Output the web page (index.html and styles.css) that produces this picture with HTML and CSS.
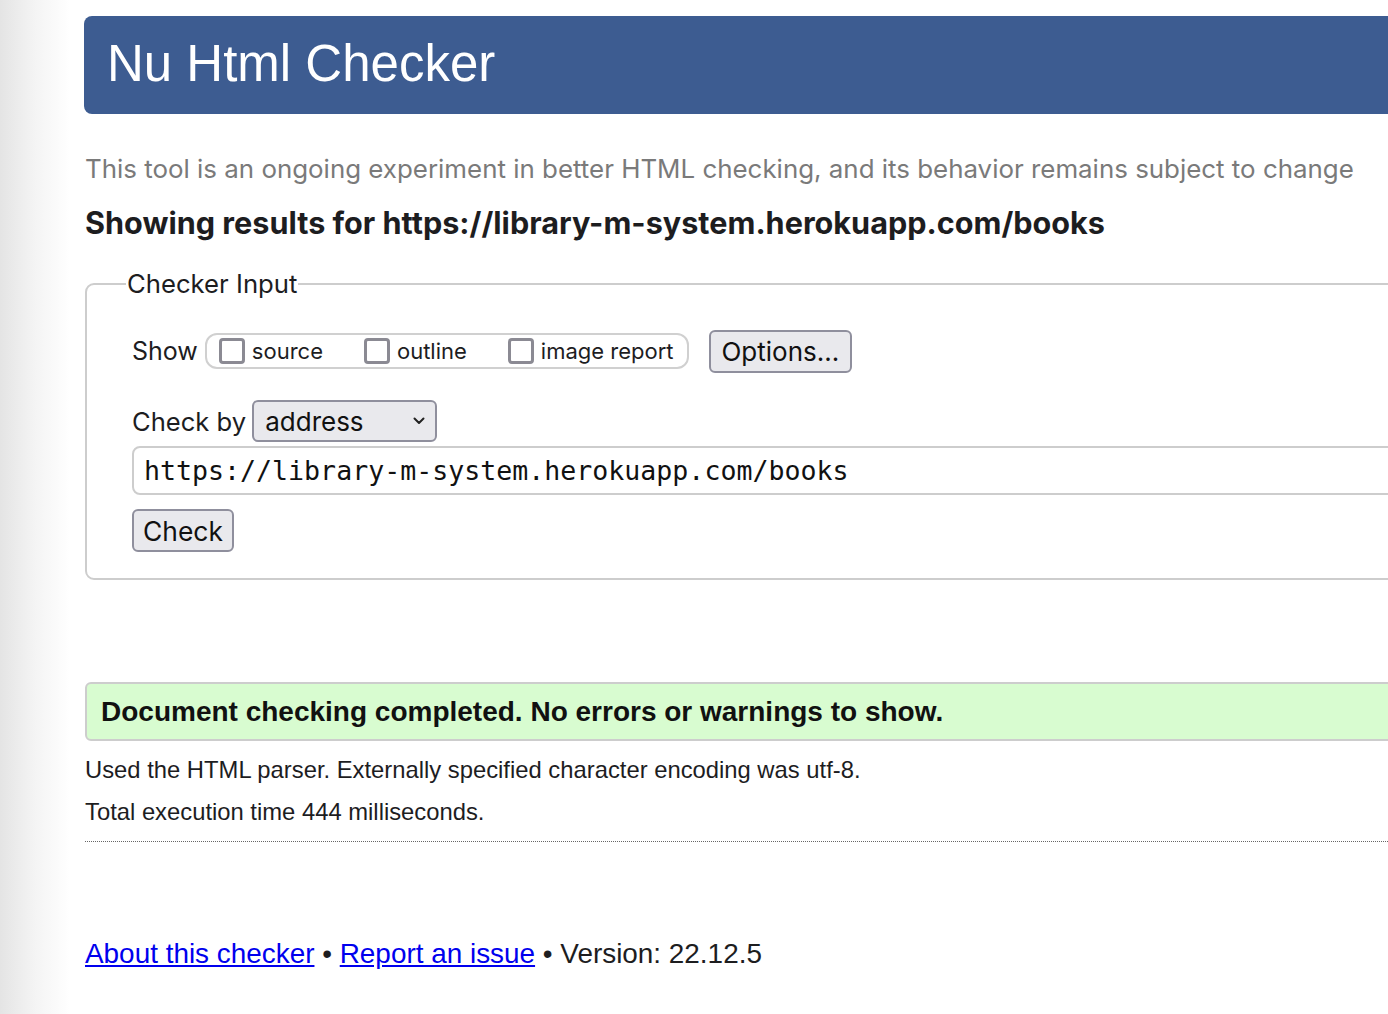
FILE: index.html
```html
<!DOCTYPE html>
<html lang="en">
<head>
<meta charset="utf-8">
<title>Showing results for https://library-m-system.herokuapp.com/books - Nu Html Checker</title>
<link rel="stylesheet" href="styles.css">
</head>
<body>
<div class="page">
  <h1 class="banner">Nu Html Checker</h1>
  <p class="tagline">This tool is an ongoing experiment in better HTML checking, and its behavior remains subject to change</p>
  <h2 class="results-title">Showing results for https://library-m-system.herokuapp.com/books</h2>

  <form class="checker-form">
    <fieldset class="checker-input">
      <legend class="checker-legend">Checker Input</legend>
      <div class="show-row">
        <span class="row-label">Show</span>
        <div class="show-group">
          <label class="opt"><input type="checkbox" class="box"><span>source</span></label>
          <label class="opt"><input type="checkbox" class="box"><span>outline</span></label>
          <label class="opt"><input type="checkbox" class="box"><span>image report</span></label>
        </div>
        <button type="button" class="btn options-btn">Options...</button>
      </div>
      <div class="checkby-row">
        <span class="row-label">Check by</span>
        <div class="select-wrap">
          <select class="select"><option>address</option></select>
          <svg class="chev" width="14" height="10" viewBox="0 0 14 10"><path d="M2.5 2.5 L7 7 L11.5 2.5" fill="none" stroke="#222" stroke-width="2" stroke-linecap="round" stroke-linejoin="round"/></svg>
        </div>
      </div>
      <input class="url" type="text" value="https://library-m-system.herokuapp.com/books">
      <div class="check-row">
        <button type="button" class="btn check-btn">Check</button>
      </div>
    </fieldset>
  </form>

  <p class="success">Document checking completed. No errors or warnings to show.</p>
  <p class="details">Used the HTML parser. Externally specified character encoding was utf-8.</p>
  <p class="details details-time">Total execution time 444 milliseconds.</p>
  <hr class="dotted">
  <p class="footer"><a href="#">About this checker</a> • <a href="#">Report an issue</a> • Version: 22.12.5</p>
</div>
</body>
</html>
```

FILE: styles.css
```css
html, body {
  margin: 0;
  padding: 0;
  overflow: hidden;
}
body {
  width: 1388px;
  height: 1014px;
  background: linear-gradient(to right, #e4e4e4 0px, #f4f4f4 35px, #ffffff 70px);
  font-family: "Liberation Sans", Arial, sans-serif;
  color: #1d1d1f;
}
.page {
  width: 1500px;
  padding-left: 84px;
  padding-top: 16px;
}
.banner {
  margin: 0;
  height: 98px;
  box-sizing: border-box;
  padding-left: 23px;
  background: #3d5c91;
  color: #fff;
  border-radius: 8px 0 0 8px;
  font-family: "Liberation Sans", Arial, sans-serif;
  font-weight: normal;
  font-size: 51px;
  line-height: 95px;
}
.tagline {
  margin: 40px 0 0 1px;
  font-family: Inter, "Liberation Sans", sans-serif;
  font-size: 25.9px;
  line-height: 30px;
  color: #7a7a7a;
}
.results-title {
  margin: 21px 0 0 1px;
  font-family: Inter, "Liberation Sans", sans-serif;
  font-weight: 700;
  font-size: 30.6px;
  line-height: 36px;
  color: #1d1d1f;
}
.checker-form {
  margin: 28px 0 0 1px;
}
.checker-input {
  margin: 0;
  border: 2px solid #cdcdcd;
  border-radius: 9px;
  padding: 30px 0 26px 45px;
  font-family: Inter, "Liberation Sans", sans-serif;
}
.checker-legend {
  margin-left: -6px;
  padding: 0 1px;
  font-size: 25.7px;
  line-height: 30px;
  color: #1d1d1f;
}
.row-label {
  font-size: 25px;
  color: #1d1d1f;
}
.show-row {
  display: flex;
  align-items: center;
  gap: 7px;
  height: 44px;
}
.show-group {
  display: flex;
  align-items: center;
  gap: 41px;
  height: 36px;
  box-sizing: border-box;
  border: 2px solid #d0d0d0;
  border-radius: 12px;
  padding: 0 12px 0 12px;
  width: 484px;
  flex-shrink: 0;
}
.opt {
  display: flex;
  align-items: center;
  gap: 7px;
  font-size: 22px;
  color: #1d1d1f;
}
.box {
  appearance: none;
  -webkit-appearance: none;
  margin: 0;
  width: 26px;
  height: 26px;
  border: 3px solid #8b8a93;
  border-radius: 4px;
  background: #fff;
  box-sizing: border-box;
}
.btn {
  font-family: Inter, "Liberation Sans", sans-serif;
  font-size: 26px;
  color: #111;
  background: #e9e9ed;
  border: 2px solid #8f8f9d;
  border-radius: 6px;
  height: 43px;
  padding: 0 8px;
  flex-shrink: 0;
}
.options-btn {
  margin-left: 13px;
  width: 143px;
}
.checkby-row {
  display: flex;
  align-items: center;
  gap: 6px;
  margin-top: 27px;
}
.checkby-row .row-label {
  font-size: 25.6px;
}
.select-wrap {
  position: relative;
}
.select {
  appearance: none;
  -webkit-appearance: none;
  width: 185px;
  height: 42px;
  font-family: Inter, "Liberation Sans", sans-serif;
  font-size: 26px;
  color: #111;
  background: #e9e9ed;
  border: 2px solid #8f8f9d;
  border-radius: 6px;
  padding: 0 0 0 11px;
}
.chev {
  position: absolute;
  right: 11px;
  top: 16px;
}
.url {
  display: block;
  margin-top: 4px;
  width: 1400px;
  height: 49px;
  box-sizing: border-box;
  border: 2px solid #cdcdcd;
  border-radius: 8px;
  padding: 0 10px;
  font-family: "DejaVu Sans Mono", monospace;
  font-size: 26.6px;
  color: #111;
}
.check-row {
  margin-top: 14px;
}
.check-btn {
  width: 102px;
  font-size: 26.4px;
}
.success {
  margin: 102px 0 0 1px;
  height: 59px;
  box-sizing: border-box;
  border: 2px solid #cdcdcd;
  border-radius: 6px;
  background: #d8fcd0;
  padding-left: 14px;
  font-family: "Liberation Sans", Arial, sans-serif;
  font-weight: 700;
  font-size: 28px;
  line-height: 55px;
  color: #111;
}
.details {
  margin: 15px 0 0 1px;
  font-size: 23.8px;
  line-height: 28px;
  color: #1d1d1f;
}
.details-time {
  margin-top: 14px;
}
.dotted {
  margin: 15px 0 0 1px;
  border: 0;
  border-top: 1px dotted #666;
  height: 0;
}
.footer {
  margin: 96px 0 0 1px;
  font-size: 27.9px;
  line-height: 32px;
  color: #1d1d1f;
}
.footer a {
  color: #0000ee;
}
```
